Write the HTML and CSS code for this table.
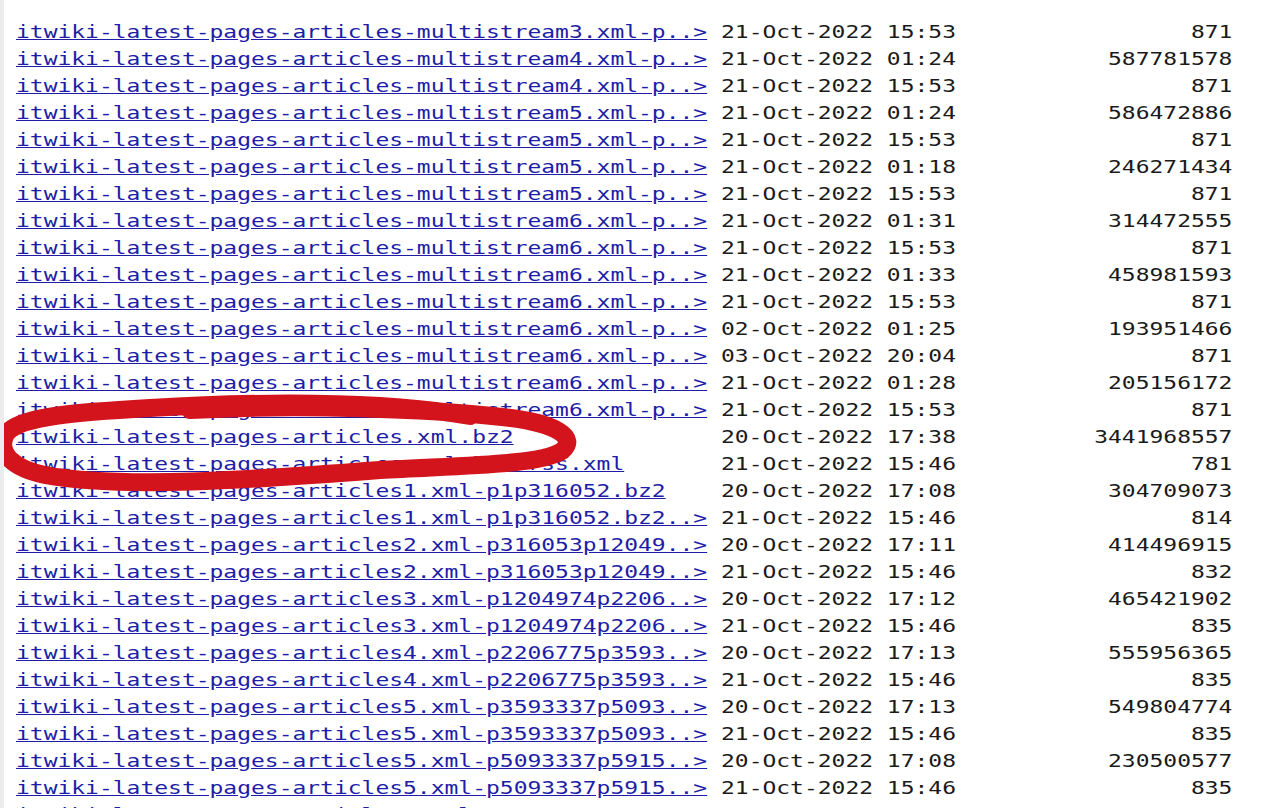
FILE: index.html
```html
<!DOCTYPE html>
<html lang="en">

<head>
    <meta charset="UTF-8">
    <meta name="viewport" content="width=device-width, initial-scale=1.0">
    <title>Index of /itwiki/latest/</title>
    <link rel="stylesheet" href="styles.css">
</head>

<body>

    <pre class="listing"><a href="#">itwiki-latest-pages-articles-multistream3.xml-p..&gt;</a> 21-Oct-2022 15:53                 871
<a href="#">itwiki-latest-pages-articles-multistream4.xml-p..&gt;</a> 21-Oct-2022 01:24           587781578
<a href="#">itwiki-latest-pages-articles-multistream4.xml-p..&gt;</a> 21-Oct-2022 15:53                 871
<a href="#">itwiki-latest-pages-articles-multistream5.xml-p..&gt;</a> 21-Oct-2022 01:24           586472886
<a href="#">itwiki-latest-pages-articles-multistream5.xml-p..&gt;</a> 21-Oct-2022 15:53                 871
<a href="#">itwiki-latest-pages-articles-multistream5.xml-p..&gt;</a> 21-Oct-2022 01:18           246271434
<a href="#">itwiki-latest-pages-articles-multistream5.xml-p..&gt;</a> 21-Oct-2022 15:53                 871
<a href="#">itwiki-latest-pages-articles-multistream6.xml-p..&gt;</a> 21-Oct-2022 01:31           314472555
<a href="#">itwiki-latest-pages-articles-multistream6.xml-p..&gt;</a> 21-Oct-2022 15:53                 871
<a href="#">itwiki-latest-pages-articles-multistream6.xml-p..&gt;</a> 21-Oct-2022 01:33           458981593
<a href="#">itwiki-latest-pages-articles-multistream6.xml-p..&gt;</a> 21-Oct-2022 15:53                 871
<a href="#">itwiki-latest-pages-articles-multistream6.xml-p..&gt;</a> 02-Oct-2022 01:25           193951466
<a href="#">itwiki-latest-pages-articles-multistream6.xml-p..&gt;</a> 03-Oct-2022 20:04                 871
<a href="#">itwiki-latest-pages-articles-multistream6.xml-p..&gt;</a> 21-Oct-2022 01:28           205156172
<a href="#">itwiki-latest-pages-articles-multistream6.xml-p..&gt;</a> 21-Oct-2022 15:53                 871
<a href="itwiki-latest-pages-articles.xml.bz2">itwiki-latest-pages-articles.xml.bz2</a>               20-Oct-2022 17:38          3441968557
<a href="itwiki-latest-pages-articles.xml.bz2-rss.xml">itwiki-latest-pages-articles.xml.bz2-rss.xml</a>       21-Oct-2022 15:46                 781
<a href="itwiki-latest-pages-articles1.xml-p1p316052.bz2">itwiki-latest-pages-articles1.xml-p1p316052.bz2</a>    20-Oct-2022 17:08           304709073
<a href="#">itwiki-latest-pages-articles1.xml-p1p316052.bz2..&gt;</a> 21-Oct-2022 15:46                 814
<a href="#">itwiki-latest-pages-articles2.xml-p316053p12049..&gt;</a> 20-Oct-2022 17:11           414496915
<a href="#">itwiki-latest-pages-articles2.xml-p316053p12049..&gt;</a> 21-Oct-2022 15:46                 832
<a href="#">itwiki-latest-pages-articles3.xml-p1204974p2206..&gt;</a> 20-Oct-2022 17:12           465421902
<a href="#">itwiki-latest-pages-articles3.xml-p1204974p2206..&gt;</a> 21-Oct-2022 15:46                 835
<a href="#">itwiki-latest-pages-articles4.xml-p2206775p3593..&gt;</a> 20-Oct-2022 17:13           555956365
<a href="#">itwiki-latest-pages-articles4.xml-p2206775p3593..&gt;</a> 21-Oct-2022 15:46                 835
<a href="#">itwiki-latest-pages-articles5.xml-p3593337p5093..&gt;</a> 20-Oct-2022 17:13           549804774
<a href="#">itwiki-latest-pages-articles5.xml-p3593337p5093..&gt;</a> 21-Oct-2022 15:46                 835
<a href="#">itwiki-latest-pages-articles5.xml-p5093337p5915..&gt;</a> 20-Oct-2022 17:08           230500577
<a href="#">itwiki-latest-pages-articles5.xml-p5093337p5915..&gt;</a> 21-Oct-2022 15:46                 835
<a href="#">itwiki-latest-pages-articles6.xml-p5915000p7415..&gt;</a> 20-Oct-2022 17:10           304990390</pre>

    <!-- red marker loop drawn over the listing -->
    <svg class="scribble" width="1280" height="808" viewBox="0 0 1280 808">
        <path d="M 470 416 C 380 400, 250 402, 150 408 C 80 412, 18 416, 6 434 C -4 452, 12 468, 45 475 C 120 489, 250 480, 380 470 C 470 465, 540 465, 562 451 C 578 438, 558 423, 502 417 C 430 409, 300 404, 190 410"
            fill="none" stroke="#d3141c" stroke-width="18" stroke-linecap="round" stroke-linejoin="round" />
    </svg>

</body>

</html>
```

FILE: styles.css
```css
html,
body {
    margin: 0;
    padding: 0;
    height: 100%;
    overflow: hidden;
    background-color: #fff;
}

body {
    border-left: 4px solid #ececec;
    box-sizing: border-box;
    position: relative;
}

.listing {
    margin: 19px 0 0 12px;
    font-family: "DejaVu Sans Mono", monospace;
    font-size: 17.6px;
    line-height: 27px;
    color: #1a1a1a;
    transform: scaleX(1.305);
    transform-origin: left top;
}

.listing a {
    color: #1d1da8;
}

.scribble {
    position: absolute;
    left: -4px;
    top: 0;
    pointer-events: none;
}
```
